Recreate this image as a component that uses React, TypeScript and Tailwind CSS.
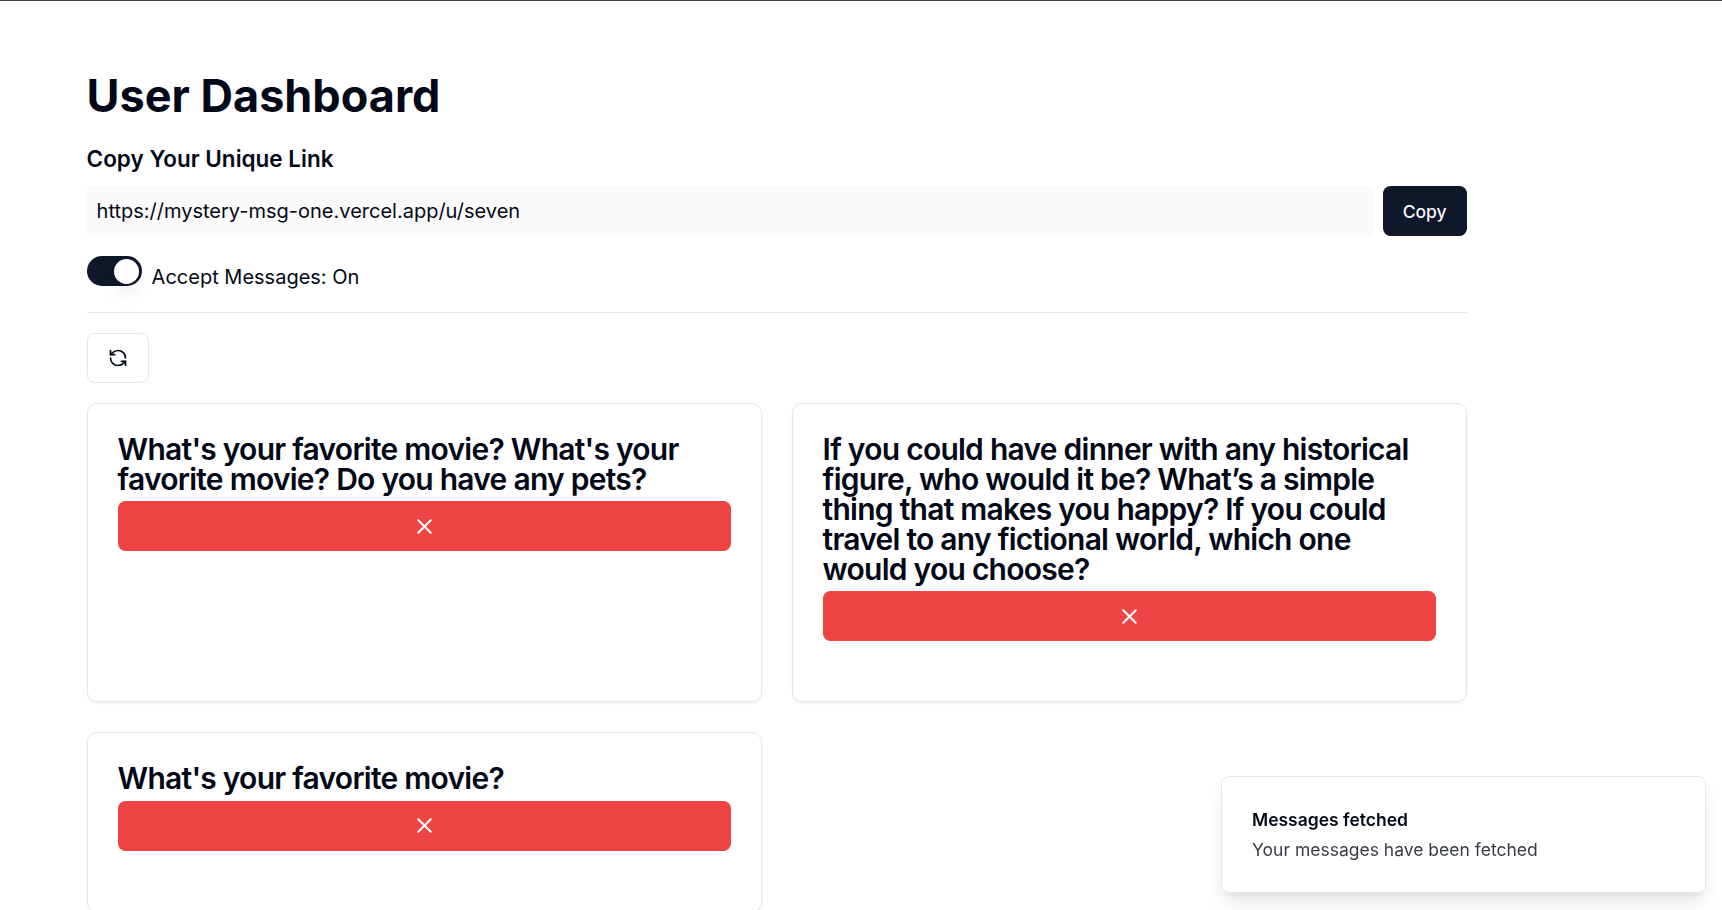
import { RefreshCcw, X } from "lucide-react";

const messages = [
  "What's your favorite movie? What's your favorite movie? Do you have any pets?",
  "If you could have dinner with any historical figure, who would it be? What’s a simple thing that makes you happy? If you could travel to any fictional world, which one would you choose?",
  "What's your favorite movie?",
];

function MessageCard({ content }: { content: string }) {
  return (
    <article className="rounded-[10px] border border-[#e2e8f0] bg-white px-[30px] pt-[30px] pb-[60px] shadow-[0_1.25px_2.5px_0_rgb(0_0_0/0.05)]">
      <h3 className="text-[30px] leading-[30px] font-semibold tracking-[-0.025em]">{content}</h3>
      <button className="mt-[7.5px] flex h-[50px] w-full items-center justify-center rounded-[7.5px] bg-[#ef4444] text-[#f8fafc]">
        <X size={25} />
      </button>
    </article>
  );
}

function Switch() {
  return (
    <button
      role="switch"
      aria-checked="true"
      className="flex h-[30px] w-[55px] items-center justify-end rounded-full bg-[#0f172a] pr-[3px]"
    >
      <span className="size-[25px] rounded-full bg-white shadow-[0_12.5px_18.75px_-3.75px_rgb(0_0_0/0.1),0_5px_7.5px_-5px_rgb(0_0_0/0.1)]" />
    </button>
  );
}

export default function App() {
  return (
    <div className="h-[910px] overflow-hidden border-t border-[#444444] bg-white font-['Inter',sans-serif] text-[20px] leading-[30px] text-[#020817]">
      <main className="ml-[86.6px] w-[1380px] pt-[70px]">
        <h1 className="mb-5 text-[45px] leading-[50px] font-bold">User Dashboard</h1>
        <h2 className="mb-2.5 text-[22.5px] leading-[35px] font-semibold">Copy Your Unique Link</h2>
        <div className="mb-5 flex gap-2.5">
          <div className="flex h-[50px] flex-1 items-center bg-[#fafafa] px-2.5">
            https://mystery-msg-one.vercel.app/u/seven
          </div>
          <button className="h-[50px] rounded-[7.5px] bg-[#0f172a] px-5 text-[17.5px] leading-[25px] font-medium text-[#f8fafc]">
            Copy
          </button>
        </div>
        <div className="flex h-[36px] gap-2.5">
          <Switch />
          <span className="pt-1.5">Accept Messages: On</span>
        </div>
        <div className="mt-5 h-px bg-[#e2e8f0]" />
        <button className="mt-5 flex h-[50px] w-[62px] items-center justify-center rounded-[7.5px] border border-[#e2e8f0] bg-white">
          <RefreshCcw size={20} />
        </button>
        <div className="mt-[19.9px] grid grid-cols-2 gap-[30px]">
          {messages.map((content) => (
            <MessageCard key={content} content={content} />
          ))}
        </div>
      </main>
      <div className="fixed right-4 bottom-[17px] flex h-[117px] w-[485px] flex-col justify-center gap-[5px] rounded-[7.5px] border border-[#e2e8f0] bg-white px-[30px] text-[17.5px] leading-[25px] shadow-[0_12.5px_18.75px_-3.75px_rgb(0_0_0/0.1),0_5px_7.5px_-5px_rgb(0_0_0/0.1)]">
        <div className="font-semibold">Messages fetched</div>
        <div className="opacity-80">Your messages have been fetched</div>
      </div>
    </div>
  );
}
